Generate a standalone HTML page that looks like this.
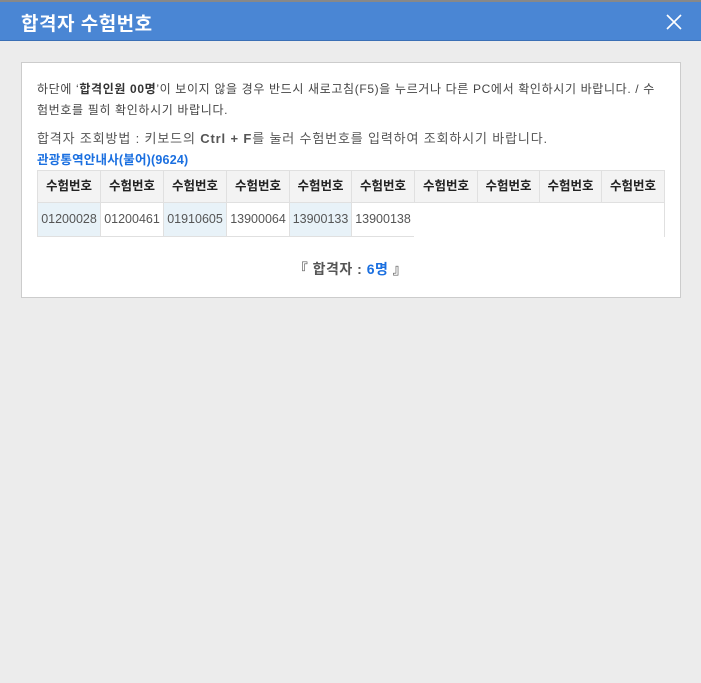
<!DOCTYPE html>
<html><head><meta charset="utf-8"><style>
*{margin:0;padding:0;box-sizing:border-box}
body{width:701px;height:683px;background:#ececec;font-family:"Liberation Sans","Noto Sans CJK KR","NanumGothic",sans-serif;position:relative;overflow:hidden;color:#444}
.top{position:absolute;left:0;top:0;width:701px;height:2px;background:#888}
.hd{position:absolute;left:0;top:2px;width:701px;height:39px;background:#4a86d4;border-bottom:1px solid #3a6fb5}
.hd h1{position:absolute;left:21px;top:7px;font-size:19px;color:#fff;font-weight:bold;letter-spacing:0.5px}
.x{position:absolute;left:666px;top:12px}
.card{position:absolute;left:21px;top:62px;width:660px;height:236px;background:#fff;border:1px solid #ccc}
.t{position:absolute;left:15px;font-size:12px;color:#444;white-space:nowrap;letter-spacing:0.64px}
.cell{position:absolute;height:33px;border:1px solid #e0e0e0;font-size:12.5px;text-align:center;line-height:31px}
.h{background:#f3f3f3;color:#222;font-weight:bold}
.d{height:35px;line-height:33px;color:#555}
</style></head><body>
<div class="top"></div>
<div class="hd"><h1>합격자 수험번호</h1>
<svg class="x" width="16" height="16" viewBox="0 0 16 16"><path d="M1 1L15 15M15 1L1 15" stroke="#fff" stroke-width="1.6"/></svg></div>
<div class="card">
<div class="t" style="top:17px">하단에 ‘<b style="color:#333">합격인원 00명</b>’이 보이지 않을 경우 반드시 새로고침(F5)을 누르거나 다른 PC에서 확인하시기 바랍니다. / 수</div>
<div class="t" style="top:38px">험번호를 필히 확인하시기 바랍니다.</div>
<div class="t" style="top:65px;font-size:13px;color:#555;letter-spacing:0.85px">합격자 조회방법 : 키보드의 <b>Ctrl + F</b>를 눌러 수험번호를 입력하여 조회하시기 바랍니다.</div>
<div class="t" style="top:86px;font-size:12.5px;color:#1a6fe0;font-weight:bold;letter-spacing:0.2px">관광통역안내사(불어)(9624)</div>
</div>
<div class="cell h" style="left:37px;top:170px;width:64px">수험번호</div>
<div class="cell h" style="left:100px;top:170px;width:64px">수험번호</div>
<div class="cell h" style="left:163px;top:170px;width:64px">수험번호</div>
<div class="cell h" style="left:226px;top:170px;width:64px">수험번호</div>
<div class="cell h" style="left:289px;top:170px;width:63px">수험번호</div>
<div class="cell h" style="left:351px;top:170px;width:64px">수험번호</div>
<div class="cell h" style="left:414px;top:170px;width:64px">수험번호</div>
<div class="cell h" style="left:477px;top:170px;width:63px">수험번호</div>
<div class="cell h" style="left:539px;top:170px;width:63px">수험번호</div>
<div class="cell h" style="left:601px;top:170px;width:64px">수험번호</div>
<div class="cell d" style="left:37px;top:202px;width:64px;background:#e8f2f8">01200028</div>
<div class="cell d" style="left:100px;top:202px;width:64px">01200461</div>
<div class="cell d" style="left:163px;top:202px;width:64px;background:#e8f2f8">01910605</div>
<div class="cell d" style="left:226px;top:202px;width:64px">13900064</div>
<div class="cell d" style="left:289px;top:202px;width:63px;background:#e8f2f8">13900133</div>
<div class="cell d" style="left:351px;top:202px;width:63px;border-right:none">13900138</div>
<div style="position:absolute;left:664px;top:202px;width:1px;height:35px;background:#e0e0e0"></div>
<div style="position:absolute;left:0;width:701px;top:259px;text-align:center;font-size:14px;font-weight:bold;color:#555;letter-spacing:0.5px">『 합격자 : <span style="color:#1a6fe0">6명</span> 』</div>
</body></html>
